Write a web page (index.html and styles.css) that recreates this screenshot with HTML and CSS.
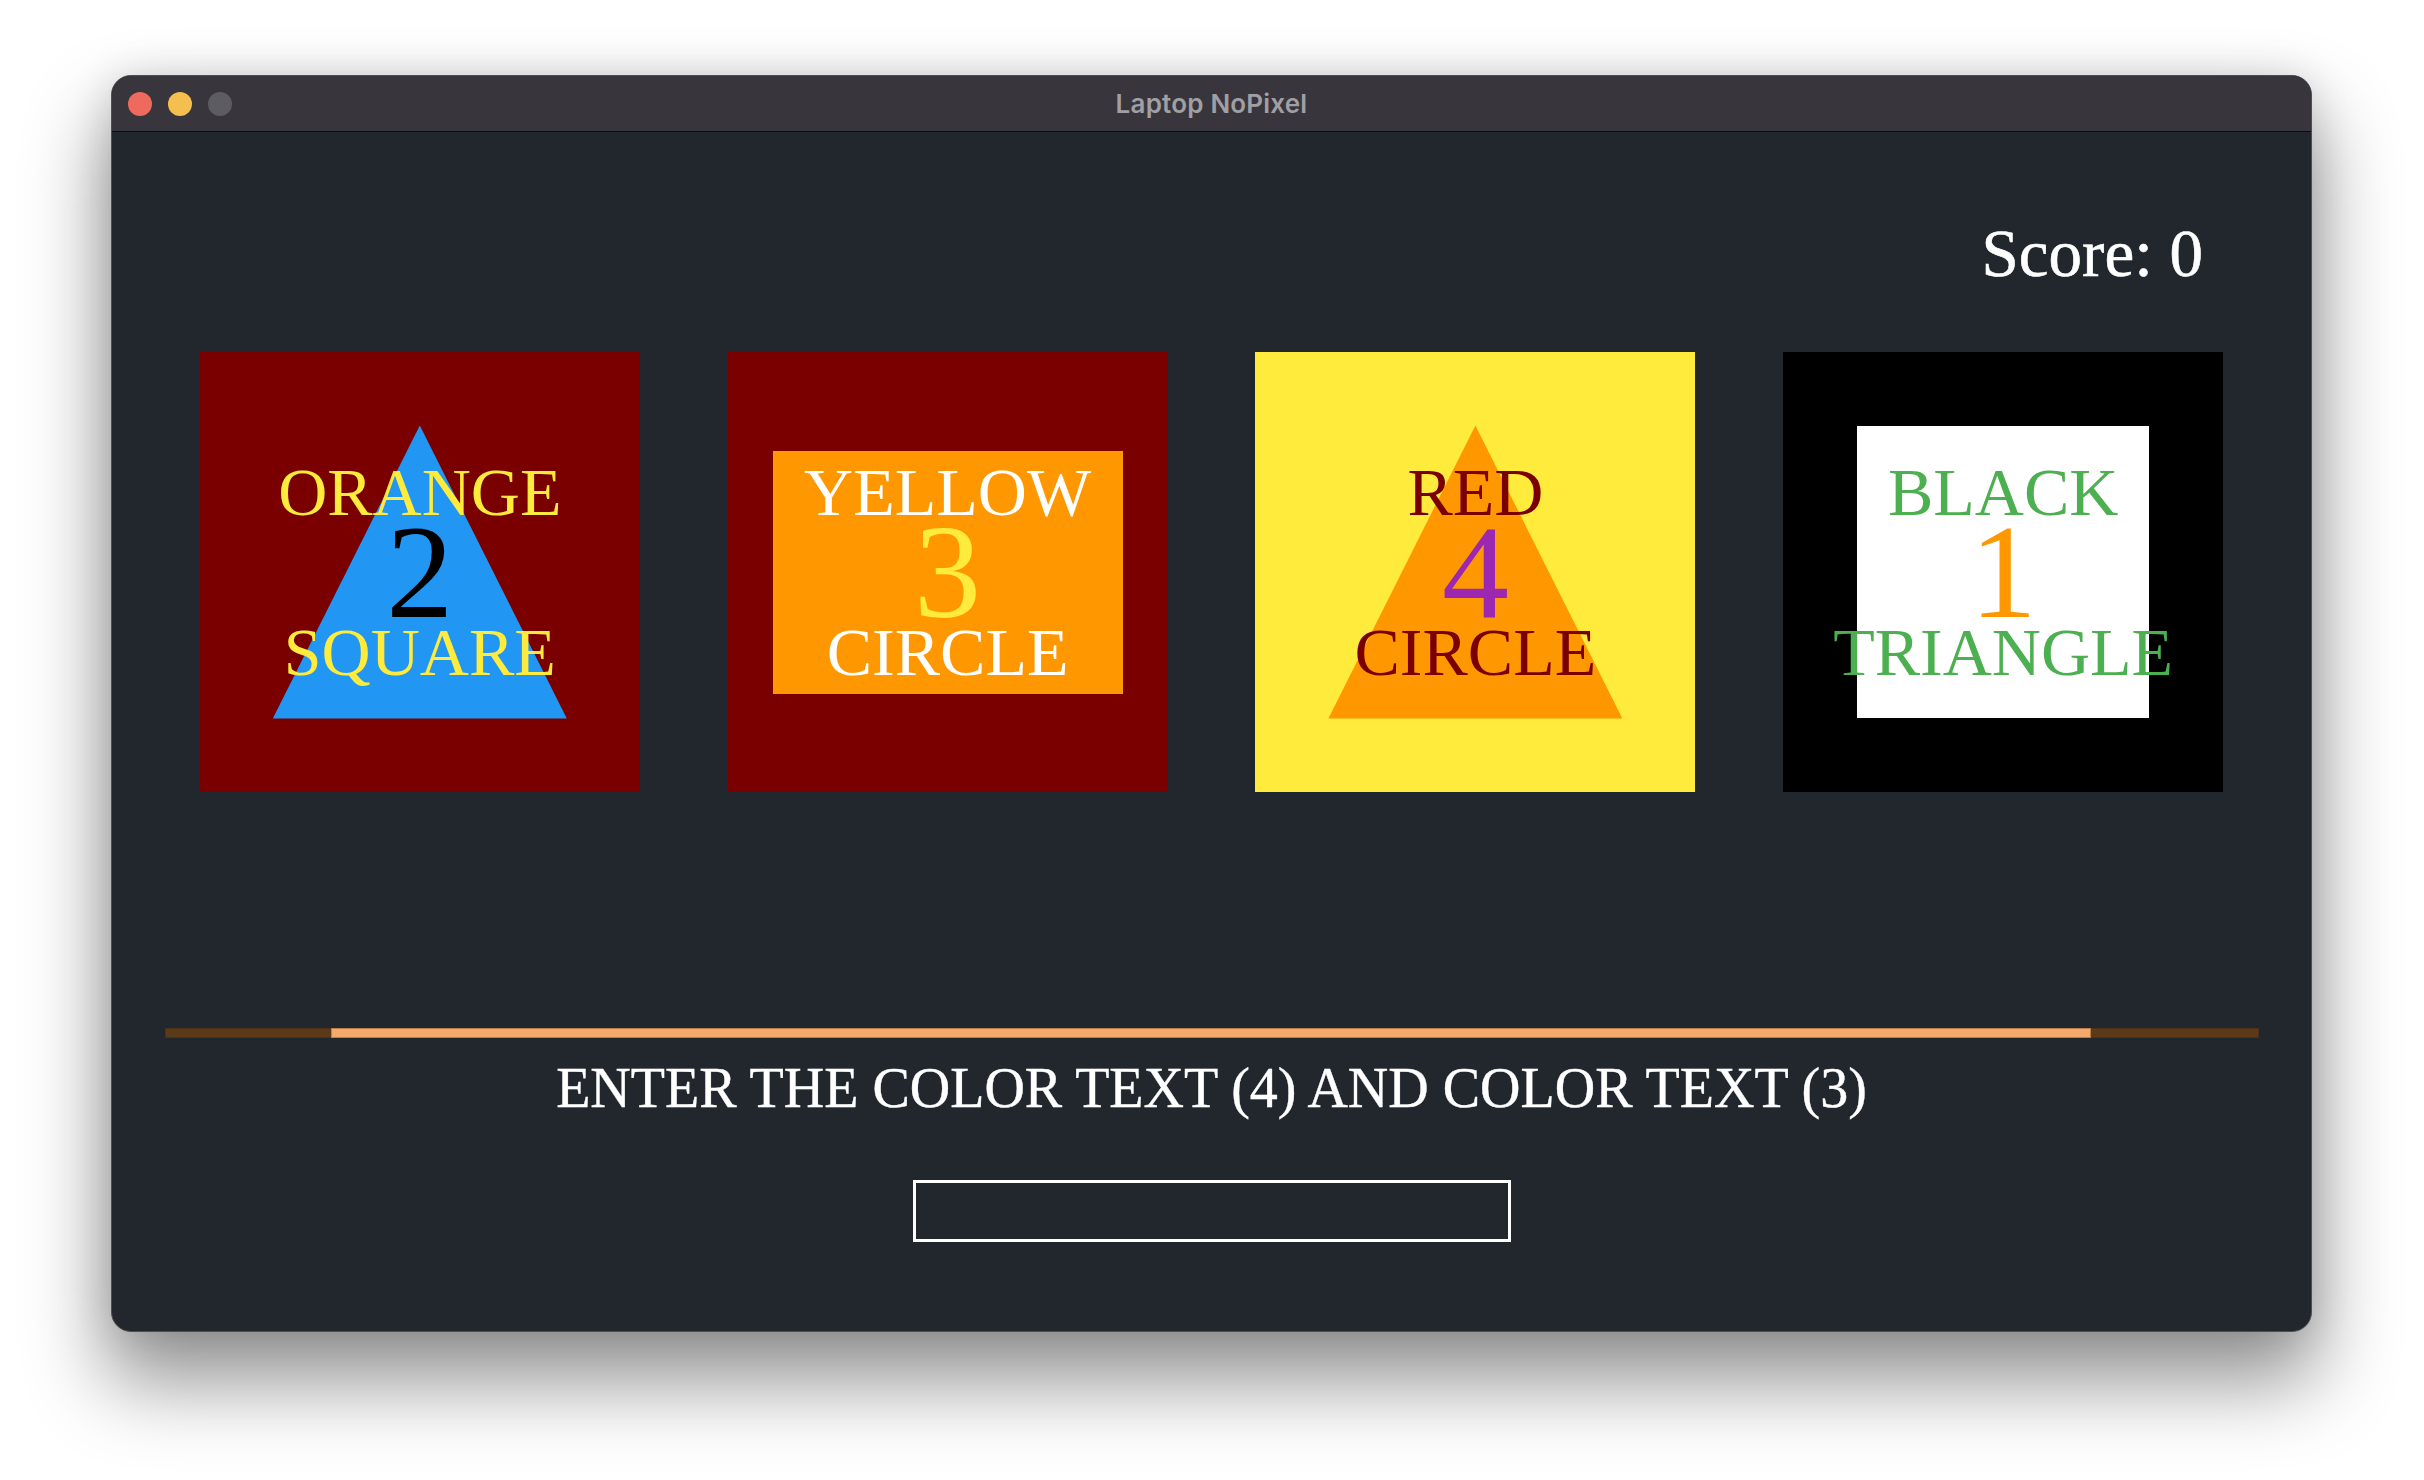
FILE: index.html
```html
<!DOCTYPE html>
<html lang="en">
<head>
<meta charset="utf-8">
<title>Laptop NoPixel</title>
<link rel="stylesheet" href="styles.css">
</head>
<body>
  <div class="window">
    <div class="titlebar">
      <div class="lights">
        <span class="light light-red"></span>
        <span class="light light-yellow"></span>
        <span class="light light-gray"></span>
      </div>
      <div class="title">Laptop NoPixel</div>
      <div class="spacer"></div>
    </div>
    <div class="content">
      <div class="score">Score: 0</div>
      <div class="cards">
        <div class="card bg-maroon">
          <div class="shape triangle fill-blue"></div>
          <div class="label">
            <span class="word c-yellow">ORANGE</span>
            <span class="num c-black">2</span>
            <span class="word c-yellow">SQUARE</span>
          </div>
        </div>
        <div class="card bg-maroon">
          <div class="shape rect fill-orange"></div>
          <div class="label">
            <span class="word c-white">YELLOW</span>
            <span class="num c-yellow">3</span>
            <span class="word c-white">CIRCLE</span>
          </div>
        </div>
        <div class="card bg-yellow">
          <div class="shape triangle fill-orange"></div>
          <div class="label">
            <span class="word c-maroon">RED</span>
            <span class="num c-purple">4</span>
            <span class="word c-maroon">CIRCLE</span>
          </div>
        </div>
        <div class="card bg-black">
          <div class="shape square fill-white"></div>
          <div class="label">
            <span class="word c-green">BLACK</span>
            <span class="num c-orange">1</span>
            <span class="word c-green">TRIANGLE</span>
          </div>
        </div>
      </div>
      <div class="timer">
        <div class="timer-fill" style="margin-left: 166px; width: 1760px;"></div>
      </div>
      <div class="prompt">ENTER THE COLOR TEXT (4) AND COLOR TEXT (3)</div>
      <input class="answer" type="text" aria-label="answer">
    </div>
  </div>
</body>
</html>
```

FILE: styles.css
```css
* { box-sizing: border-box; }

html, body {
  margin: 0;
  padding: 0;
}

body {
  width: 2424px;
  height: 1480px;
  background: #ffffff;
  overflow: hidden;
  font-family: "Liberation Serif", "Times New Roman", serif;
}

.window {
  margin: 75px 0 0 111px;
  width: 2201px;
  height: 1257px;
  border: 1px solid #4d4f54;
  border-radius: 20px;
  overflow: hidden;
  display: flex;
  flex-direction: column;
  background: #22272e;
  box-shadow: 0 45px 80px 6px rgba(0, 0, 0, 0.42), 0 0 40px rgba(0, 0, 0, 0.12);
}

.titlebar {
  height: 56px;
  flex: 0 0 56px;
  background: #38363c;
  border-bottom: 1px solid #0c0c0e;
  display: grid;
  grid-template-columns: 1fr auto 1fr;
  align-items: center;
}

.lights {
  display: flex;
  gap: 16px;
  padding-left: 16px;
}

.light {
  width: 24px;
  height: 24px;
  border-radius: 50%;
  display: block;
}
.light-red { background: #ee6a5f; }
.light-yellow { background: #f5bf4f; }
.light-gray { background: #5d5c62; }

.title {
  font-family: "Inter", "Open Sans", sans-serif;
  font-weight: 600;
  font-size: 26px;
  color: #a09fa4;
  letter-spacing: 0.2px;
}

.content {
  flex: 1;
  display: flex;
  flex-direction: column;
  padding-top: 81px;
}

.score {
  font-size: 67px;
  line-height: 80px;
  color: #ffffff;
  text-align: right;
  padding-right: 108px;
  -webkit-text-stroke: 0.6px #ffffff;
}

.cards {
  margin-top: 59px;
  display: flex;
  justify-content: space-evenly;
}

.card {
  width: 440px;
  height: 440px;
  display: grid;
  place-items: center;
}

.card > * {
  grid-area: 1 / 1;
}

.bg-maroon { background: #7a0000; }
.bg-yellow { background: #ffeb3b; }
.bg-black { background: #000000; }

.shape {
  position: relative;
  z-index: 0;
}

.shape.triangle {
  width: 294px;
  height: 293px;
  clip-path: polygon(50% 0, 100% 100%, 0 100%);
}
.shape.rect {
  width: 350px;
  height: 243px;
}
.shape.square {
  width: 292px;
  height: 292px;
}

.fill-blue { background: #2196f3; }
.fill-orange { background: #ff9800; }
.fill-white { background: #ffffff; }

.label {
  position: relative;
  z-index: 1;
  display: flex;
  flex-direction: column;
  align-items: center;
  white-space: nowrap;
}

.word {
  font-size: 68px;
  line-height: 68px;
}

.num {
  font-size: 134px;
  line-height: 92px;
}

.c-yellow { color: #ffeb3b; }
.c-black { color: #000000; }
.c-white { color: #ffffff; }
.c-maroon { color: #7a0000; }
.c-purple { color: #9c27b0; }
.c-green { color: #4caf50; }
.c-orange { color: #ff9800; }

.timer {
  margin: 236px auto 0;
  width: 2094px;
  height: 10px;
  background: #5b3a1a;
  box-shadow: inset 0 0 0 1px rgba(0, 0, 0, 0.15);
  display: flex;
}

.timer-fill {
  height: 10px;
  background: #f5aa6b;
  box-shadow: inset 0 0 0 1px rgba(120, 70, 30, 0.45);
}

.prompt {
  margin-top: 17px;
  font-size: 56px;
  line-height: 66px;
  color: #ffffff;
  text-align: center;
  -webkit-text-stroke: 0.4px #ffffff;
}

.answer {
  display: block;
  margin: 59px auto 0;
  width: 598px;
  height: 62px;
  border: 3px solid #ffffff;
  border-radius: 0;
  background: transparent;
  outline: none;
  padding: 0 10px;
  font-family: "Liberation Serif", serif;
  font-size: 32px;
  color: #ffffff;
}
```
